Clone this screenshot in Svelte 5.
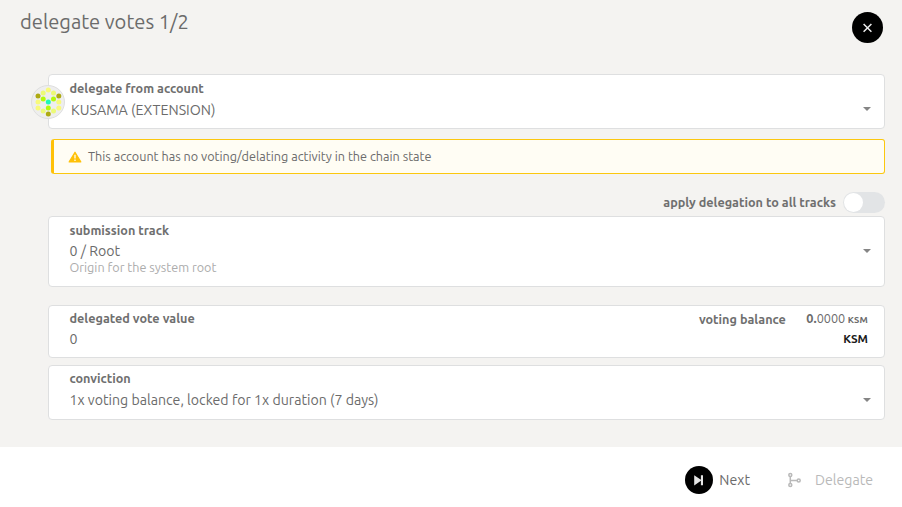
<script>
  const dots = [
    [17.3, 5.1, '#f8fa7a'], [12.2, 8.1, '#ecfa78'], [22.5, 8.1, '#ecfa78'],
    [7, 11, '#aeaa12'], [27.8, 11, '#aeaa12'],
    [12.2, 14, '#b4fa0c'], [22.5, 14, '#b4fa0c'],
    [7, 17, '#f8fa7a'], [27.8, 17, '#f8fa7a'], [17.3, 17, '#1df7b9'],
    [7, 22.9, '#f8fa7a'], [27.8, 22.9, '#f8fa7a'], [17.3, 22.9, '#b4fa0c'],
    [12.2, 25.9, '#ecfa78'], [22.5, 25.9, '#ecfa78'], [17.3, 28.9, '#aeaa12']
  ];
</script>

{#snippet caret()}
  <svg class="caret" width="8" height="4" viewBox="0 0 8 4"><path d="M0 0h8L4 4z" /></svg>
{/snippet}

<div class="modal">
  <header>
    <h1>delegate votes 1/2</h1>
    <button class="close" aria-label="Close">
      <svg width="31" height="31" viewBox="0 0 31 31"><path d="M11.6 12l7.8 7.8M19.4 12l-7.8 7.8" stroke="#eee" stroke-width="1.5" /></svg>
    </button>
  </header>

  <main>
    <section class="card account">
      <svg class="identicon" width="34" height="34" viewBox="0 0 34 34">
        <circle cx="17" cy="17" r="16.5" fill="#eee" stroke="#dedede" />
        {#each dots as [x, y, fill]}
          <circle cx={x} cy={y} r="2.5" {fill} />
        {/each}
      </svg>
      <div class="label">delegate from account</div>
      <div class="value kusama">KUSAMA (EXTENSION)</div>
      {@render caret()}
    </section>

    <div class="warning">
      <svg width="14" height="12" viewBox="0 0 14 12">
        <path d="M7 1.2L12.8 10.9H1.2z" fill="#ffc107" stroke="#ffc107" stroke-width="1.2" stroke-linejoin="round" />
        <path d="M7 3.8v3.6M7 8.4v1.5" stroke="#fffdf4" stroke-width="1.3" />
      </svg>
      <span>This account has no voting/delating activity in the chain state</span>
    </div>

    <div class="toggle-row">
      <span class="label">apply delegation to all tracks</span>
      <span class="toggle"><i></i></span>
    </div>

    <section class="card track">
      <div class="label">submission track</div>
      <div class="value">0 / Root</div>
      <div class="hint">Origin for the system root</div>
      {@render caret()}
    </section>

    <section class="card amount">
      <div class="line">
        <div class="label">delegated vote value</div>
        <div class="balance">
          <span class="label">voting balance</span>
          <span class="figure"><b>0.</b>0000 <small>KSM</small></span>
        </div>
      </div>
      <div class="line">
        <div class="value">0</div>
        <strong>KSM</strong>
      </div>
    </section>

    <section class="card conviction">
      <div class="label">conviction</div>
      <div class="value">1x voting balance, locked for 1x duration (7 days)</div>
      {@render caret()}
    </section>
  </main>

  <footer>
    <button class="action">
      <svg width="28" height="28" viewBox="0 0 28 28">
        <circle cx="14" cy="14" r="14" fill="#000" />
        <path d="M9.2 9.2v10.2l6.7-4.7v4.5H18V9.2h-2.1v4.6z" fill="#e4e4e4" />
      </svg>
      <span>Next</span>
    </button>
    <button class="action disabled" disabled>
      <svg width="14" height="16" viewBox="0 0 14 16" fill="none" stroke="#b9b9b9" stroke-width="1.5">
        <circle cx="2.3" cy="3" r="1.5" /><circle cx="2.3" cy="13" r="1.5" /><circle cx="10.7" cy="8.5" r="1.5" />
        <path d="M2.3 4.5v7M2.3 8.5h6.9" />
      </svg>
      <span>Delegate</span>
    </button>
  </footer>
</div>

<style>
  :global(body) { background: #fff; }
  .modal {
    width: 902px;
    height: 507px;
    box-sizing: border-box;
    overflow: hidden;
    display: flex;
    flex-direction: column;
    background: #f4f3f1;
    color: #6b6b6b;
    font-family: Ubuntu, 'Noto Sans', 'Open Sans', sans-serif;
    font-size: 14.15px;
  }
  span { white-space: nowrap; }
  header {
    height: 74px;
    box-sizing: border-box;
    padding: 8px 19px 0 20px;
    display: flex;
    justify-content: space-between;
    align-items: flex-start;
  }
  h1 { margin: 0; font-size: 20.15px; font-weight: 400; line-height: 28px; }
  button { border: 0; padding: 0; background: none; font: inherit; color: inherit; }
  .close { width: 31px; height: 31px; margin-top: 4px; border-radius: 50%; background: #000; }
  .close svg { display: block; }
  main { height: 373px; padding: 0 17px 0 48px; display: flex; flex-direction: column; }
  .card {
    position: relative;
    box-sizing: border-box;
    flex: none;
    border: 1px solid #dedfe0;
    border-radius: 4px;
    background: #fff;
    padding: 4px 16px 0 20.5px;
  }
  .account { height: 55px; }
  .track { height: 71px; }
  .amount { height: 53px; margin-top: 18px; padding-top: 3px; }
  .conviction { height: 55px; margin-top: 7px; padding-top: 3px; }
  .identicon { position: absolute; left: -18px; top: 10px; }
  .caret { position: absolute; right: 13px; top: 32px; fill: #858585; }
  .label { font-size: 12.65px; font-weight: 700; line-height: 18px; color: #6f6f6f; }
  .value { line-height: 20px; margin-top: 3px; }
  .kusama { padding-left: 1.5px; font-size: 14.25px; }
  .track .value { margin-top: 2px; }
  .hint { font-size: 12.6px; line-height: 16px; color: #acacac; margin-top: -2px; }
  .warning {
    flex: none;
    box-sizing: border-box;
    height: 35px;
    margin: 10px 0 0 3px;
    border: 1px solid #fbc70f;
    border-left: 3px solid #ffc107;
    border-radius: 3px;
    background: #fffdf4;
    display: flex;
    align-items: center;
    gap: 6px;
    padding-left: 14px;
    font-size: 12.64px;
  }
  .warning span { padding-bottom: 2px; }
  .toggle-row {
    flex: none;
    height: 21px;
    margin: 18px 0 3px;
    display: flex;
    align-items: center;
    justify-content: flex-end;
    gap: 7px;
  }
  .toggle-row .label { padding-bottom: 2px; }
  .toggle { width: 42px; height: 21px; border-radius: 11px; background: #e2e4e6; }
  .toggle i { display: block; width: 19px; height: 19px; margin: 1px; border-radius: 50%; background: #fff; }
  .line { display: flex; justify-content: space-between; }
  .balance { display: flex; align-items: center; gap: 20.5px; }
  .figure { font-size: 12.7px; line-height: 18px; }
  small { font-size: 9.3px; font-weight: 700; letter-spacing: 0.2px; margin-left: -0.5px; }
  .amount .value { margin-top: 1px; line-height: 18px; }
  strong { font-size: 11.7px; line-height: 18px; margin-top: 1px; color: #1b1b1b; }
  footer {
    flex: 1;
    display: flex;
    align-items: flex-start;
    justify-content: flex-end;
    gap: 38px;
    padding: 19px 29px 0 0;
    background: #fff;
  }
  .action { display: flex; align-items: center; gap: 6px; height: 28px; }
  .action svg { display: block; }
  .disabled { gap: 13px; color: #b9b9b9; }
</style>
